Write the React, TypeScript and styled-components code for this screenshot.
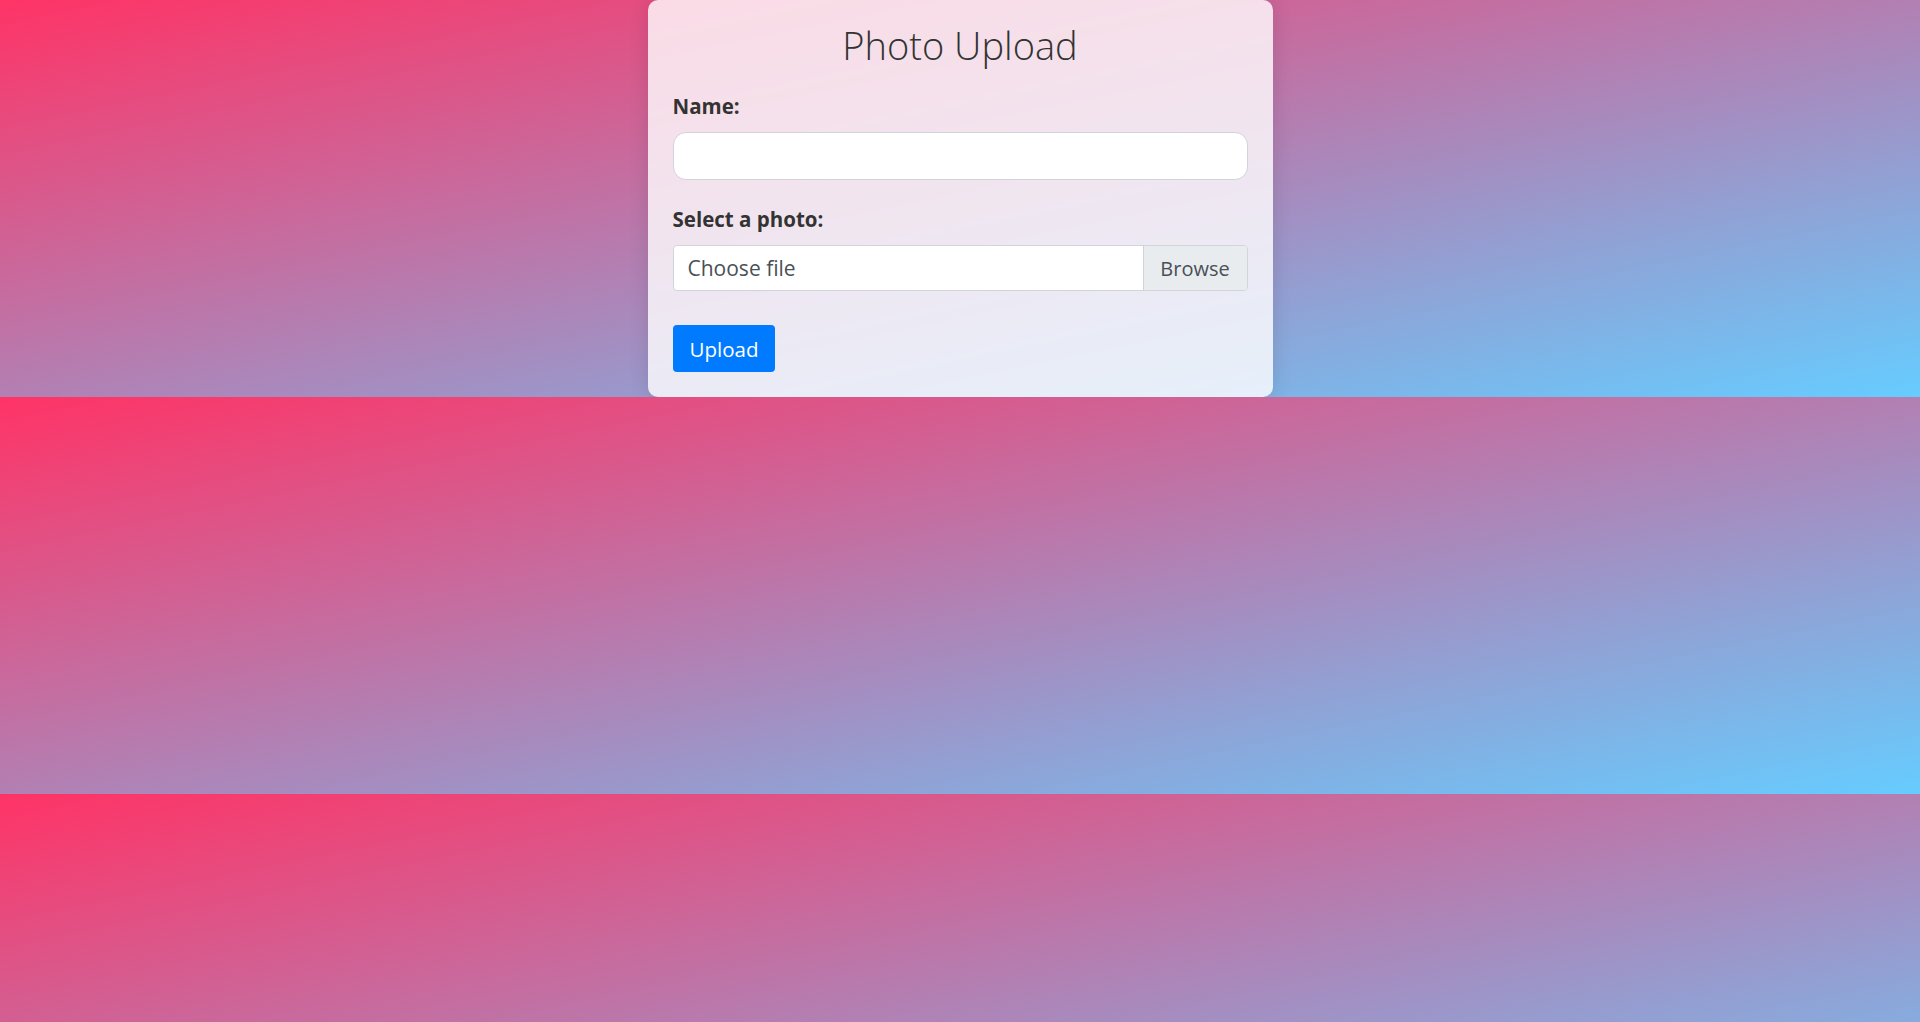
import React from "react";
import styled, { createGlobalStyle } from "styled-components";

const GlobalStyle = createGlobalStyle`
  * { box-sizing: border-box; }
  body {
    margin: 0;
    font-family: "Open Sans", "Noto Sans", Arial, sans-serif;
    background: linear-gradient(to bottom right, #ff3366, #66ccff);
    color: #333;
  }
`;

const Page = styled.main`
  display: flex;
  justify-content: center;
`;

const Card = styled.form`
  width: 625px;
  padding: 23px 25px 25px;
  background: rgba(255, 255, 255, 0.8);
  border-radius: 10px;
  box-shadow: 0 0 20px rgba(0, 0, 0, 0.12);
  display: flex;
  flex-direction: column;
`;

const Title = styled.h2`
  margin: 0 0 27px;
  font-size: 38px;
  line-height: 44px;
  font-weight: 300;
  text-align: center;
  color: #333;
`;

const Group = styled.div<{ $last?: boolean }>`
  display: flex;
  flex-direction: column;
  margin-bottom: ${(p) => (p.$last ? "34px" : "27px")};
`;

const Label = styled.label`
  font-size: 20.5px;
  line-height: 24px;
  font-weight: 700;
  color: #333;
  margin-bottom: 14px;
`;

const TextInput = styled.input`
  height: 48px;
  width: 100%;
  border: 1px solid #d3d3dc;
  border-radius: 13px;
  background: #fff;
  padding: 0 15px;
  font-family: inherit;
  font-size: 20px;
  color: #495057;
  outline: none;
`;

const FileBox = styled.div`
  height: 46px;
  display: flex;
  border: 1px solid #d3d3dc;
  border-radius: 4px;
  background: #fff;
  overflow: hidden;
`;

const FileLabel = styled.span`
  flex: 1;
  display: flex;
  align-items: center;
  padding-left: 14px;
  font-size: 21px;
  color: #495057;
`;

const Browse = styled.span`
  width: 104px;
  display: flex;
  align-items: center;
  justify-content: center;
  background: #e9ecef;
  border-left: 1px solid #d3d3dc;
  font-size: 20px;
  color: #495057;
`;

const Button = styled.button`
  align-self: flex-start;
  height: 47px;
  padding: 0 17px;
  border: none;
  border-radius: 4px;
  background: #007bff;
  color: #fff;
  font-family: inherit;
  font-size: 20.5px;
  cursor: pointer;
`;

export default function App() {
  return (
    <>
      <GlobalStyle />
      <Page>
        <Card onSubmit={(e) => e.preventDefault()}>
          <Title>Photo Upload</Title>
          <Group>
            <Label htmlFor="name">Name:</Label>
            <TextInput id="name" type="text" />
          </Group>
          <Group $last>
            <Label>Select a photo:</Label>
            <FileBox>
              <FileLabel>Choose file</FileLabel>
              <Browse>Browse</Browse>
            </FileBox>
          </Group>
          <Button type="submit">Upload</Button>
        </Card>
      </Page>
    </>
  );
}
